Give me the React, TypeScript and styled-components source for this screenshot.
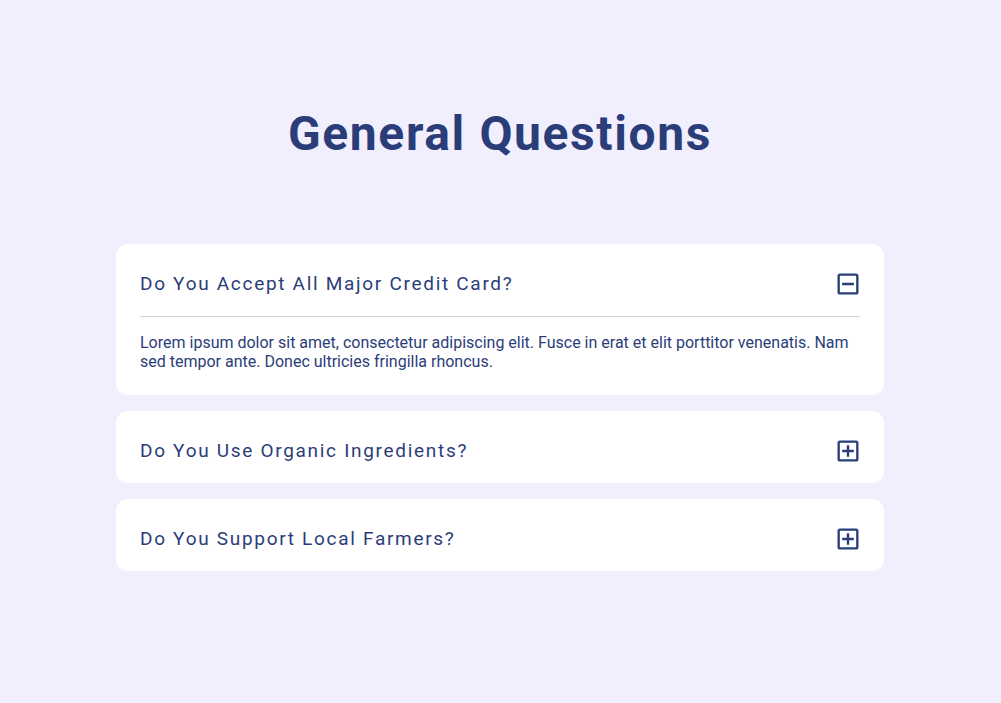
import React, { useState } from "react";
import styled, { createGlobalStyle } from "styled-components";

const Global = createGlobalStyle`
  html, body { margin: 0; padding: 0; background: #f1effd; }
  body { font-family: Roboto, "Noto Sans", Arial, sans-serif; }
  * { box-sizing: border-box; }
`;

const Page = styled.main`
  min-height: 703px;
  display: flex;
  flex-direction: column;
  align-items: center;
  padding: 106px 1px 0 0;
`;

const Title = styled.h1`
  margin: 0 0 82px;
  font-size: 48px;
  font-weight: 700;
  letter-spacing: 1.6px;
  color: #2b3d79;
  line-height: 56px;
`;

const List = styled.div`
  width: 768px;
  display: flex;
  flex-direction: column;
  gap: 16px;
`;

const Card = styled.div`
  background: #ffffff;
  border-radius: 12px;
`;

const Header = styled.button`
  width: 100%;
  display: flex;
  align-items: center;
  justify-content: space-between;
  padding: 26px 22px 18px 24px;
  border: none;
  background: transparent;
  cursor: pointer;
  font-family: inherit;
  text-align: left;
`;

const Question = styled.span`
  font-size: 19px;
  font-weight: 400;
  letter-spacing: 1.7px;
  color: #2b3d79;
  line-height: 28px;
`;

const Body = styled.div`
  margin: 0 24px;
  border-top: 1px solid #cfcfcf;
  padding: 16px 0 24px;
  font-size: 16px;
  line-height: 19px;
  color: #2b3d79;
`;

const Icon = styled.svg`
  display: block;
  width: 28px;
  height: 28px;
  flex-shrink: 0;
  fill: #2b3d79;
`;

const MinusBox = () => (
  <Icon viewBox="0 0 24 24">
    <path d="M19 3H5c-1.11 0-2 .9-2 2v14c0 1.1.89 2 2 2h14c1.1 0 2-.9 2-2V5c0-1.1-.9-2-2-2zm0 16H5V5h14v14zM7 11h10v2H7z" />
  </Icon>
);

const PlusBox = () => (
  <Icon viewBox="0 0 24 24">
    <path d="M19 3H5c-1.11 0-2 .9-2 2v14c0 1.1.89 2 2 2h14c1.1 0 2-.9 2-2V5c0-1.1-.9-2-2-2zm0 16H5V5h14v14zm-8-2h2v-4h4v-2h-4V7h-2v4H7v2h4z" />
  </Icon>
);

const faqs = [
  {
    q: "Do You Accept All Major Credit Card?",
    a: "Lorem ipsum dolor sit amet, consectetur adipiscing elit. Fusce in erat et elit porttitor venenatis. Nam sed tempor ante. Donec ultricies fringilla rhoncus.",
  },
  {
    q: "Do You Use Organic Ingredients?",
    a: "Lorem ipsum dolor sit amet, consectetur adipiscing elit. Fusce in erat et elit porttitor venenatis. Nam sed tempor ante. Donec ultricies fringilla rhoncus.",
  },
  {
    q: "Do You Support Local Farmers?",
    a: "Lorem ipsum dolor sit amet, consectetur adipiscing elit. Fusce in erat et elit porttitor venenatis. Nam sed tempor ante. Donec ultricies fringilla rhoncus.",
  },
];

export default function App() {
  const [open, setOpen] = useState<number | null>(0);
  return (
    <>
      <Global />
      <Page>
        <Title>General Questions</Title>
        <List>
          {faqs.map((f, i) => (
            <Card key={i}>
              <Header onClick={() => setOpen(open === i ? null : i)}>
                <Question>{f.q}</Question>
                {open === i ? <MinusBox /> : <PlusBox />}
              </Header>
              {open === i && <Body>{f.a}</Body>}
            </Card>
          ))}
        </List>
      </Page>
    </>
  );
}
